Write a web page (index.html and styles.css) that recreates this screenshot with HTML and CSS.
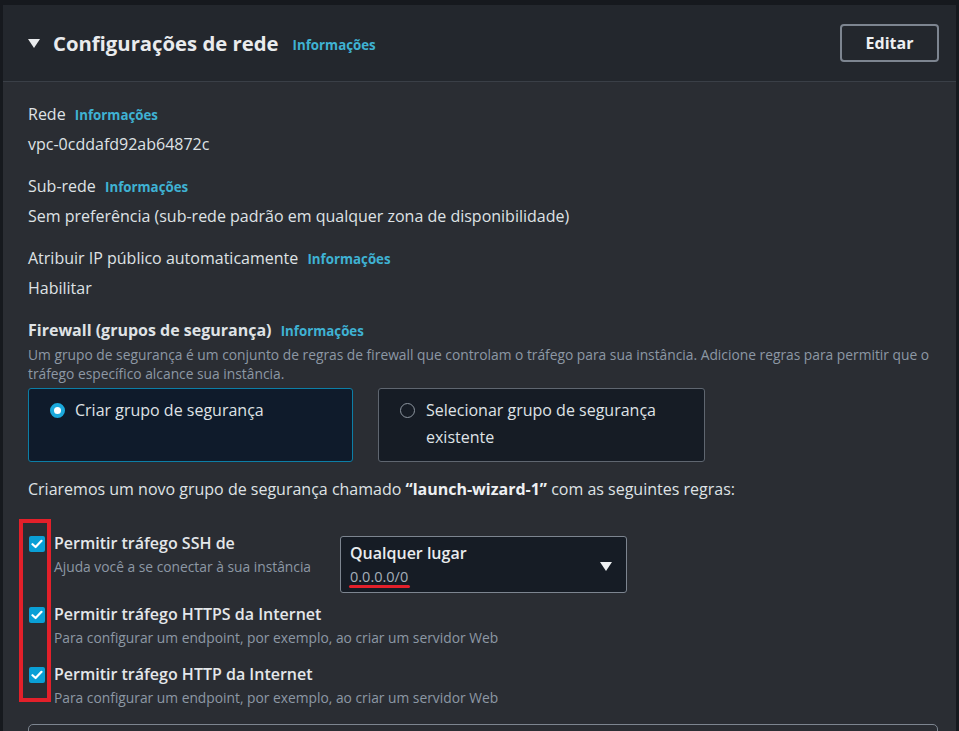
FILE: index.html
```html
<!DOCTYPE html>
<html lang="pt-BR">
<head>
<meta charset="utf-8">
<title>Configurações de rede</title>
<link rel="stylesheet" href="styles.css">
</head>
<body>
<div class="panel">
  <div class="panel-header">
    <div class="title-group">
      <svg class="caret-down" width="12" height="9" viewBox="0 0 12 9"><path d="M0 0 H12 L6 9 Z" fill="#e9ebed"/></svg>
      <h2 class="title">Configurações de rede</h2>
      <a class="info info-title">Informações</a>
    </div>
    <button class="btn">Editar</button>
  </div>
  <div class="panel-body">
    <div class="field">
      <div class="label">Rede <a class="info">Informações</a></div>
      <div class="value">vpc-0cddafd92ab64872c</div>
    </div>
    <div class="field">
      <div class="label">Sub-rede <a class="info">Informações</a></div>
      <div class="value">Sem preferência (sub-rede padrão em qualquer zona de disponibilidade)</div>
    </div>
    <div class="field">
      <div class="label">Atribuir IP público automaticamente <a class="info">Informações</a></div>
      <div class="value">Habilitar</div>
    </div>
    <div class="field fw">
      <div class="label strong">Firewall (grupos de segurança) <a class="info">Informações</a></div>
      <div class="desc">Um grupo de segurança é um conjunto de regras de firewall que controlam o tráfego para sua instância. Adicione regras para permitir que o tráfego específico alcance sua instância.</div>
      <div class="cards">
        <div class="card selected">
          <span class="radio on"></span>
          <span class="card-text">Criar grupo de segurança</span>
        </div>
        <div class="card">
          <span class="radio"></span>
          <span class="card-text">Selecionar grupo de segurança existente</span>
        </div>
      </div>
    </div>
    <div class="intro">Criaremos um novo grupo de segurança chamado <b>“launch-wizard-1”</b> com as seguintes regras:</div>
    <div class="rules">
      <div class="highlight-box"></div>
      <div class="rule rule-ssh">
        <span class="check"><svg width="12" height="10" viewBox="0 0 12 10"><path d="M1.5 5.2 L4.6 8 L10.5 1.8" fill="none" stroke="#fff" stroke-width="2.2" stroke-linecap="round" stroke-linejoin="round"/></svg></span>
        <div class="rule-text narrow">
          <div class="rule-title">Permitir tráfego SSH de</div>
          <div class="rule-sub">Ajuda você a se conectar à sua instância</div>
        </div>
        <div class="select">
          <div class="select-text">
            <div class="select-main">Qualquer lugar</div>
            <div class="select-sub">0.0.0.0/0</div>
            <span class="red-line"></span>
          </div>
          <svg class="select-caret" width="12" height="9" viewBox="0 0 12 9"><path d="M0 0 H12 L6 9 Z" fill="#eef0f2"/></svg>
        </div>
      </div>
      <div class="rule rule-https">
        <span class="check"><svg width="12" height="10" viewBox="0 0 12 10"><path d="M1.5 5.2 L4.6 8 L10.5 1.8" fill="none" stroke="#fff" stroke-width="2.2" stroke-linecap="round" stroke-linejoin="round"/></svg></span>
        <div class="rule-text">
          <div class="rule-title">Permitir tráfego HTTPS da Internet</div>
          <div class="rule-sub">Para configurar um endpoint, por exemplo, ao criar um servidor Web</div>
        </div>
      </div>
      <div class="rule rule-http">
        <span class="check"><svg width="12" height="10" viewBox="0 0 12 10"><path d="M1.5 5.2 L4.6 8 L10.5 1.8" fill="none" stroke="#fff" stroke-width="2.2" stroke-linecap="round" stroke-linejoin="round"/></svg></span>
        <div class="rule-text">
          <div class="rule-title">Permitir tráfego HTTP da Internet</div>
          <div class="rule-sub">Para configurar um endpoint, por exemplo, ao criar um servidor Web</div>
        </div>
      </div>
    </div>
    <div class="bottom-box"></div>
  </div>
</div>
</body>
</html>
```
FILE: styles.css
```css
* { box-sizing: border-box; }
html, body { margin: 0; padding: 0; }
body {
  background: #16191e;
  font-family: "Open Sans", "Noto Sans", sans-serif;
  color: #e4e7ea;
  height: 731px;
  overflow: hidden;
}
.panel {
  margin: 5px 3px 0 3px;
  background: #2a2d33;
  height: 726px;
  overflow: hidden;
}
.panel-header {
  height: 77px;
  background: #23272d;
  border-bottom: 1px solid #3a3f47;
  display: flex;
  align-items: center;
  justify-content: space-between;
  padding: 0 17px 0 25px;
}
.title-group { display: flex; align-items: center; }
.caret-down { margin-right: 13px; margin-top: 1px; }
.title {
  margin: 0;
  font-size: 20.3px;
  font-weight: 700;
  color: #e9ebed;
}
.info {
  color: #3fb2d3;
  font-size: 13.3px;
  font-weight: 700;
  margin-left: 5px;
}
.info-title { margin-left: 14px; margin-top: 3px; }
.btn {
  width: 99px;
  height: 38px;
  background: #23272d;
  border: 2px solid #7d8590;
  border-radius: 4px;
  color: #eef0f2;
  font-family: inherit;
  font-size: 16px;
  font-weight: 700;
}
.panel-body {
  padding: 21px 18px 0 25px;
  font-size: 16px;
}
.field { margin-bottom: 20px; }
.label, .value { line-height: 22px; color: #dfe2e5; }
.value { margin-top: 7px; }
.label.strong { font-weight: 700; }
.fw { margin-bottom: 0; }
.desc {
  font-size: 13.8px;
  line-height: 19px;
  color: #8d98a5;
  margin-top: 3px;
}
.cards {
  display: flex;
  gap: 25px;
  margin-top: 5px;
}
.card {
  width: 327px;
  height: 74px;
  display: flex;
  align-items: flex-start;
  padding: 8px 20px 0 21px;
  border: 1.5px solid #5f6670;
  border-radius: 3px;
  background: #161c25;
  line-height: 27px;
  color: #dfe2e5;
}
.card.selected {
  width: 325px;
  background: #0f1b2b;
  border-color: #0c7ea6;
}
.card-text { flex: 1; }
.radio {
  flex: none;
  width: 15px;
  height: 15px;
  border-radius: 50%;
  border: 1.5px solid #8d96a0;
  margin: 6px 11px 0 0;
}
.radio.on {
  border: 4.5px solid #1ba9dc;
  background: #fff;
  margin-right: 10px;
}
.intro {
  margin-top: 16px;
  line-height: 22px;
  color: #dfe2e5;
}
.intro b { color: #eef0f2; }
.rules {
  position: relative;
  margin-top: 32px;
}
.highlight-box {
  position: absolute;
  left: -9px;
  top: -13px;
  width: 32px;
  height: 183px;
  border: 4px solid #e3202a;
}
.rule {
  display: flex;
  align-items: flex-start;
}
.rule-https { margin-top: 10px; }
.rule-http { margin-top: 15px; }
.check {
  flex: none;
  width: 16px;
  height: 16px;
  border-radius: 2px;
  background: #0a9fd6;
  margin: 4px 9px 0 1px;
  display: flex;
  align-items: center;
  justify-content: center;
}
.rule-title {
  line-height: 22px;
  font-weight: 600;
  color: #e4e7ea;
}
.rule-sub {
  font-size: 13.8px;
  line-height: 20px;
  margin-top: 3px;
  color: #8d98a5;
}
.narrow { width: 286px; }
.select {
  margin-top: 4px;
  width: 287px;
  height: 57px;
  border: 1.5px solid #7d8590;
  border-radius: 3px;
  background: #161c25;
  display: flex;
  justify-content: space-between;
  align-items: flex-start;
  padding: 5px 14px 0 9px;
}
.select-main { line-height: 22px; font-weight: 600; color: #e9ebed; }
.select-sub { font-size: 14.5px; line-height: 20px; color: #a6afb9; margin-top: 3px; }
.red-line {
  display: block;
  width: 61px;
  height: 3px;
  border-radius: 2px;
  background: #e3202a;
  margin-top: -2px;
  margin-left: -1px;
}
.select-caret { margin-top: 20px; }
.bottom-box {
  margin-top: 16px;
  height: 40px;
  border: 1.5px solid #7d8590;
  border-radius: 5px 5px 0 0;
}
```
